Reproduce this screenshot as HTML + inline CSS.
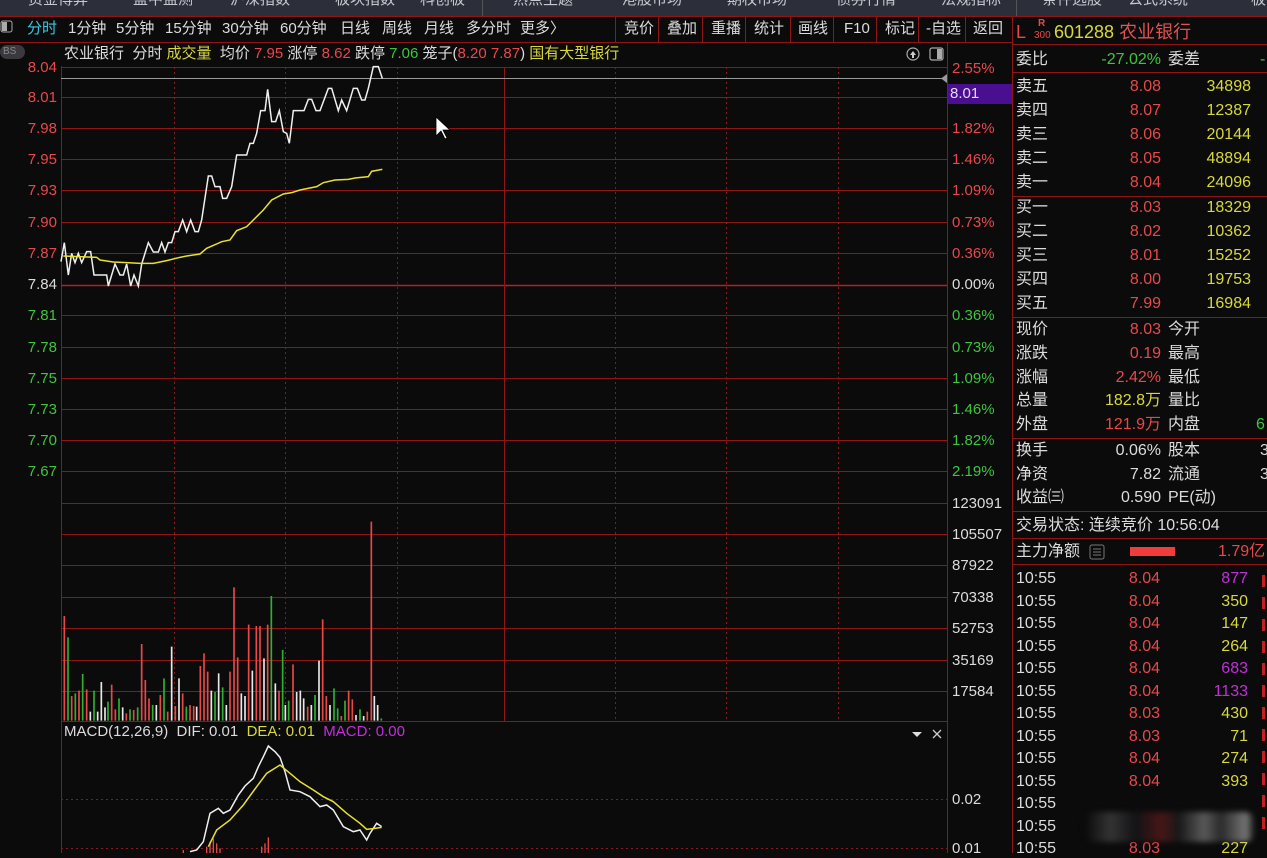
<!DOCTYPE html>
<html><head><meta charset="utf-8"><style>
*{margin:0;padding:0;box-sizing:border-box}
body{width:1267px;height:853px;overflow:hidden;background:#0b0b0c;font-family:"Liberation Sans","Noto Sans CJK SC",sans-serif;font-size:15px;color:#d8d8d8;position:relative}
.a{position:absolute;white-space:nowrap;line-height:18px}
.r{color:#e8484a}.g{color:#3ec43e}.y{color:#d8d83a}.w{color:#dcdcdc}.p{color:#c030d8}.c{color:#3cc8e0}
.ra{text-align:right}
</style></head><body>
<div style="position:absolute;left:0;top:0;width:1267px;height:16px;background:#2c2f3a;overflow:hidden">
<div class="a" style="top:-9px;left:28px;color:#c8c8d0;font-size:15px">资金博弈</div>
<div class="a" style="top:-9px;left:133px;color:#c8c8d0">盘中监测</div>
<div class="a" style="top:-9px;left:230px;color:#c8c8d0">沪深指数</div>
<div class="a" style="top:-9px;left:335px;color:#c8c8d0">板块指数</div>
<div class="a" style="top:-9px;left:420px;color:#c8c8d0">科创板</div>
<div class="a" style="top:-9px;left:513px;color:#c8c8d0">热点主题</div>
<div class="a" style="top:-9px;left:622px;color:#c8c8d0">港股市场</div>
<div class="a" style="top:-9px;left:727px;color:#c8c8d0">期权市场</div>
<div class="a" style="top:-9px;left:836px;color:#c8c8d0">债券行情</div>
<div class="a" style="top:-9px;left:941px;color:#c8c8d0">法规指标</div>
<div class="a" style="top:-9px;left:1042px;color:#c8c8d0">条件选股</div>
<div class="a" style="top:-9px;left:1128px;color:#c8c8d0">公式系统</div>
<div class="a" style="top:-9px;left:1251px;color:#c8c8d0">板</div>
<div style="position:absolute;left:482px;top:0;width:1px;height:16px;background:#555"></div>
<div style="position:absolute;left:1016px;top:0;width:1px;height:16px;background:#555"></div>
</div>

<svg width="1267" height="853" style="position:absolute;left:0;top:0" xmlns="http://www.w3.org/2000/svg">
<g stroke="#8e1616" stroke-width="1" fill="none">
<line x1="0" y1="16.5" x2="1267" y2="16.5"/>
<line x1="0" y1="42.5" x2="1012" y2="42.5"/>
<line x1="615.5" y1="16" x2="615.5" y2="42"/><line x1="658.5" y1="16" x2="658.5" y2="42"/><line x1="702.5" y1="16" x2="702.5" y2="42"/><line x1="745.5" y1="16" x2="745.5" y2="42"/><line x1="790.5" y1="16" x2="790.5" y2="42"/><line x1="833.5" y1="16" x2="833.5" y2="42"/><line x1="876.5" y1="16" x2="876.5" y2="42"/><line x1="918.5" y1="16" x2="918.5" y2="42"/><line x1="965.5" y1="16" x2="965.5" y2="42"/>
<line x1="61.5" y1="66" x2="61.5" y2="853"/>
<line x1="947.5" y1="42" x2="947.5" y2="853"/>
<line x1="1012.5" y1="16" x2="1012.5" y2="853"/>
<path d="M61 67.5H947M61 97.5H947M61 128.5H947M61 159.5H947M61 190.5H947M61 222.5H947M61 253.5H947M61 315.5H947M61 347.5H947M61 378.5H947M61 409.5H947M61 440.5H947M61 471.5H947M61 503.5H947"/>
<path d="M61 285.5H947" stroke="#c01c1c" stroke-width="1.5"/>
<path d="M61 534.5H947M61 565.5H947M61 597.5H947M61 628.5H947M61 660.5H947M61 691.5H947M61 721.5H947"/>
<line x1="504.5" y1="67" x2="504.5" y2="721"/>
<path d="M1012 44.5H1267M1012 72.5H1267M1012 196.5H1267M1012 317.5H1267M1012 438.5H1267M1012 511.5H1267M1012 538.5H1267M1012 564.5H1267"/>
</g>
<g stroke="#8e1616" stroke-width="1" stroke-dasharray="2,3" fill="none">
<path d="M174.5 67V721M285.5 67V721M397.5 67V721M615.5 67V721M726.5 67V721M838.5 67V721"/>
<path d="M61 799.5H947M61 848.5H947"/>
</g>
<line x1="61" y1="78.5" x2="945" y2="78.5" stroke="#9a9a9a" stroke-width="1"/>
<path d="M941 78.5 L947 74 L947 83Z" fill="#9a9a9a"/>
<rect x="948" y="84" width="64" height="20" fill="#4a0e90"/>
<g transform="translate(0,40) scale(0.33333)" fill="none" stroke-width="4.5">
<polyline stroke="#f0f0f0" points="183,665 193,608 205,705 215,640 225,668 235,640 245,668 260,635 272,635 282,705 320,705 325,738 345,672 360,705 370,705 380,672 392,738 402,705 415,738 425,672 445,608 460,636 475,636 485,608 495,636 505,608 515,608 525,575 535,575 548,540 560,575 572,540 585,575 595,575 605,540 625,408 635,408 645,440 660,440 668,475 680,475 695,440 710,345 740,345 750,310 760,310 770,280 782,212 795,212 803,148 815,245 827,245 838,212 850,275 860,280 868,310 880,212 912,212 925,178 935,178 948,212 960,212 985,145 995,145 1015,212 1025,180 1040,212 1060,145 1072,145 1085,180 1095,180 1105,145 1120,80 1135,80 1147,115"/>
<polyline stroke="#e8e030" points="190,648 290,652 300,660 340,666 380,668 420,670 460,670 500,662 540,652 560,648 600,642 620,625 650,612 665,605 690,600 710,572 740,560 755,545 770,530 790,510 815,480 850,462 875,458 900,450 950,440 970,428 1005,420 1045,418 1065,414 1105,410 1115,394 1147,388"/>
</g>
<g transform="translate(0,480) scale(0.33333)" fill="none" stroke-width="5">
<path stroke="#e84848" d="M193 722V408M215 722V648M237 722V632M260 722V628M335 722V614M346 722V688M379 722V700M401 722V690M425 722V492M436 722V600M447 722V655M481 722V645M503 722V695M526 722V678M548 722V640M570 722V675M581 722V678M601 722V558M612 722V520M623 722V575M690 722V575M702 722V322M713 722V532M746 722V434M769 722V438M780 722V438M803 722V434M837 722V632M879 722V553M923 722V680M968 722V418M979 722V648M1024 722V708M1046 722V632M1057 722V658M1102 722V695M1114 722V125"/>
<path stroke="#30b030" d="M204 722V472M226 722V640M248 722V582M282 722V632M324 722V665M357 722V655M390 722V688M413 722V682M458 722V675M492 722V595M559 722V680M645 722V636M668 722V622M814 722V348M848 722V510M866 722V662M945 722V645M1002 722V625M1013 722V685M1035 722V662M1080 722V688M1144 722V715"/>
<path stroke="#e8e8e8" d="M271 722V695M293 722V695M304 722V606M315 722V682M368 722V682M469 722V675M515 722V500M537 722V595M590 722V680M634 722V632M656 722V580M679 722V675M724 722V640M735 722V648M757 722V572M792 722V535M826 722V610M856 722V675M890 722V636M901 722V632M911 722V655M934 722V675M957 722V542M990 722V675M1068 722V705M1091 722V708M1123 722V648M1133 722V675"/>
</g>
<g transform="translate(0,480) scale(0.33333)" fill="none" stroke-width="4.5">
<path stroke="#e84848" stroke-width="4" d="M550 1119V1110M620 1119V1100M630 1119V1085M640 1119V1075M650 1119V1090M660 1119V1105M785 1119V1100M795 1119V1090M805 1119V1072"/>
<polyline stroke="#f0f0f0" points="570,1115 590,1110 610,1085 630,1000 655,985 670,1000 690,990 715,945 735,918 760,895 775,860 790,830 805,798 825,815 840,832 855,875 870,930 900,935 930,950 960,980 980,975 1000,990 1030,1040 1060,1055 1080,1050 1100,1080 1110,1060 1130,1030 1145,1040"/>
<polyline stroke="#e8e030" points="625,1100 650,1050 690,1020 730,975 770,920 800,880 840,855 870,880 900,905 940,930 970,950 1000,965 1040,1000 1080,1030 1100,1048 1125,1045 1145,1042"/>
</g>
<circle cx="913" cy="54" r="6" fill="none" stroke="#aaa" stroke-width="1.2"/><path d="M910 55L913 51L916 55Z M912 55h2v3h-2z" fill="#ccc"/>
<rect x="930" y="48" width="13" height="12" rx="2" fill="none" stroke="#aaa" stroke-width="1.2"/><rect x="937" y="49" width="5" height="10" fill="#aaa"/>
<path d="M912 732h10l-5 5z" fill="#ddd"/>
<path d="M933 730l8 8M941 730l-8 8" stroke="#ccc" stroke-width="1.3"/>
<rect x="1" y="21" width="11" height="11" rx="2" fill="none" stroke="#aaa"/><rect x="2" y="22" width="5" height="9" fill="#aaa"/>
<rect x="0" y="45" width="25" height="14" rx="7" fill="#3a3a3e"/>
<path d="M436 117V136L441 131L445 139L447 138L443 130L450 130Z" fill="#fff" stroke="#000" stroke-width="0.8"/>
<rect x="1130" y="547" width="45" height="9" fill="#f03c3c"/>
<rect x="1090" y="545" width="14" height="14" rx="2" fill="none" stroke="#777"/><path d="M1093 549h8M1093 552h8M1093 555h8" stroke="#777"/>
</svg>

<div class="a c" style="top:20px;left:27px">分时</div>
<div class="a w" style="top:20px;left:68px">1分钟</div>
<div class="a w" style="top:20px;left:116px">5分钟</div>
<div class="a w" style="top:20px;left:165px">15分钟</div>
<div class="a w" style="top:20px;left:222px">30分钟</div>
<div class="a w" style="top:20px;left:280px">60分钟</div>
<div class="a w" style="top:20px;left:340px">日线</div>
<div class="a w" style="top:20px;left:382px">周线</div>
<div class="a w" style="top:20px;left:424px">月线</div>
<div class="a w" style="top:20px;left:466px">多分时</div>
<div class="a w" style="top:20px;left:520px">更多〉</div>
<div class="a w" style="top:20px;left:624px">竞价</div>
<div class="a w" style="top:20px;left:667px">叠加</div>
<div class="a w" style="top:20px;left:711px">重播</div>
<div class="a w" style="top:20px;left:754px">统计</div>
<div class="a w" style="top:20px;left:798px">画线</div>
<div class="a w" style="top:20px;left:844px">F10</div>
<div class="a w" style="top:20px;left:885px">标记</div>
<div class="a w" style="top:20px;left:926px">-自选</div>
<div class="a w" style="top:20px;left:973px">返回</div>
<div class="a" style="top:46px;left:3px;font-size:10px;line-height:12px;color:#888">BS</div>

<div class="a" style="top:45px;left:64px"><span class="w">农业银行&nbsp; 分时 </span><span class="y">成交量</span><span class="w">&nbsp; 均价 </span><span class="r">7.95</span><span class="w"> 涨停 </span><span class="r">8.62</span><span class="w"> 跌停 </span><span class="g">7.06</span><span class="w"> 笼子(</span><span class="r">8.20 7.87</span><span class="w">) </span><span class="y">国有大型银行</span></div>

<div style="position:absolute;left:0;top:1px">
<div class="a r ra" style="top:58px;left:0;width:57px">8.04</div>
<div class="a r ra" style="top:88px;left:0;width:57px">8.01</div>
<div class="a r ra" style="top:119px;left:0;width:57px">7.98</div>
<div class="a r ra" style="top:150px;left:0;width:57px">7.95</div>
<div class="a r ra" style="top:181px;left:0;width:57px">7.93</div>
<div class="a r ra" style="top:213px;left:0;width:57px">7.90</div>
<div class="a r ra" style="top:244px;left:0;width:57px">7.87</div>
<div class="a w ra" style="top:275px;left:0;width:57px">7.84</div>
<div class="a g ra" style="top:306px;left:0;width:57px">7.81</div>
<div class="a g ra" style="top:338px;left:0;width:57px">7.78</div>
<div class="a g ra" style="top:369px;left:0;width:57px">7.75</div>
<div class="a g ra" style="top:400px;left:0;width:57px">7.73</div>
<div class="a g ra" style="top:431px;left:0;width:57px">7.70</div>
<div class="a g ra" style="top:462px;left:0;width:57px">7.67</div>

<div class="a r" style="top:59px;left:952px">2.55%</div>
<div class="a" style="top:84px;left:950px;color:#e8d8ff">8.01</div>
<div class="a r" style="top:119px;left:952px">1.82%</div>
<div class="a r" style="top:150px;left:952px">1.46%</div>
<div class="a r" style="top:181px;left:952px">1.09%</div>
<div class="a r" style="top:213px;left:952px">0.73%</div>
<div class="a r" style="top:244px;left:952px">0.36%</div>
<div class="a w" style="top:275px;left:952px">0.00%</div>
<div class="a g" style="top:306px;left:952px">0.36%</div>
<div class="a g" style="top:338px;left:952px">0.73%</div>
<div class="a g" style="top:369px;left:952px">1.09%</div>
<div class="a g" style="top:400px;left:952px">1.46%</div>
<div class="a g" style="top:431px;left:952px">1.82%</div>
<div class="a g" style="top:462px;left:952px">2.19%</div>
<div class="a w" style="top:494px;left:952px">123091</div>
<div class="a w" style="top:525px;left:952px">105507</div>
<div class="a w" style="top:556px;left:952px">87922</div>
<div class="a w" style="top:588px;left:952px">70338</div>
<div class="a w" style="top:619px;left:952px">52753</div>
<div class="a w" style="top:651px;left:952px">35169</div>
<div class="a w" style="top:682px;left:952px">17584</div>
<div class="a w" style="top:790px;left:952px">0.02</div>
<div class="a w" style="top:839px;left:952px">0.01</div>
</div>

<div class="a" style="top:723px;left:64px"><span class="w">MACD(12,26,9)&nbsp; DIF: 0.01&nbsp; </span><span class="y">DEA: 0.01&nbsp; </span><span class="p">MACD: 0.00</span></div>

<div class="a" style="top:21px;left:1016px;font-size:18px;line-height:22px"><span class="r">L</span></div>
<div class="a r" style="top:18px;left:1038px;font-size:10px;line-height:11px;font-weight:bold">R</div>
<div class="a r" style="top:30px;left:1034px;font-size:10px;line-height:11px">300</div>
<div class="a" style="top:21px;left:1054px;font-size:18px;line-height:22px"><span class="y">601288</span> <span class="r" style="color:#e25050">农业银行</span></div>

<div class="a w" style="top:51px;left:1016px;font-size:16px">委比</div>
<div class="a g ra" style="top:51px;left:1060px;width:101px;font-size:16px">-27.02%</div>
<div class="a w" style="top:51px;left:1168px;font-size:16px">委差</div>
<div class="a g" style="top:51px;left:1260px;font-size:16px">-</div>

<div style="position:absolute;left:0;top:2px">
<div class="a w" style="top:76px;left:1016px;font-size:16px">卖五</div><div class="a r ra" style="top:76px;left:1080px;width:81px;font-size:16px">8.08</div><div class="a y ra" style="top:76px;left:1170px;width:81px;font-size:16px">34898</div>
<div class="a w" style="top:100px;left:1016px;font-size:16px">卖四</div><div class="a r ra" style="top:100px;left:1080px;width:81px;font-size:16px">8.07</div><div class="a y ra" style="top:100px;left:1170px;width:81px;font-size:16px">12387</div>
<div class="a w" style="top:124px;left:1016px;font-size:16px">卖三</div><div class="a r ra" style="top:124px;left:1080px;width:81px;font-size:16px">8.06</div><div class="a y ra" style="top:124px;left:1170px;width:81px;font-size:16px">20144</div>
<div class="a w" style="top:148px;left:1016px;font-size:16px">卖二</div><div class="a r ra" style="top:148px;left:1080px;width:81px;font-size:16px">8.05</div><div class="a y ra" style="top:148px;left:1170px;width:81px;font-size:16px">48894</div>
<div class="a w" style="top:172px;left:1016px;font-size:16px">卖一</div><div class="a r ra" style="top:172px;left:1080px;width:81px;font-size:16px">8.04</div><div class="a y ra" style="top:172px;left:1170px;width:81px;font-size:16px">24096</div>
<div class="a w" style="top:197px;left:1016px;font-size:16px">买一</div><div class="a r ra" style="top:197px;left:1080px;width:81px;font-size:16px">8.03</div><div class="a y ra" style="top:197px;left:1170px;width:81px;font-size:16px">18329</div>
<div class="a w" style="top:221px;left:1016px;font-size:16px">买二</div><div class="a r ra" style="top:221px;left:1080px;width:81px;font-size:16px">8.02</div><div class="a y ra" style="top:221px;left:1170px;width:81px;font-size:16px">10362</div>
<div class="a w" style="top:245px;left:1016px;font-size:16px">买三</div><div class="a r ra" style="top:245px;left:1080px;width:81px;font-size:16px">8.01</div><div class="a y ra" style="top:245px;left:1170px;width:81px;font-size:16px">15252</div>
<div class="a w" style="top:269px;left:1016px;font-size:16px">买四</div><div class="a r ra" style="top:269px;left:1080px;width:81px;font-size:16px">8.00</div><div class="a y ra" style="top:269px;left:1170px;width:81px;font-size:16px">19753</div>
<div class="a w" style="top:293px;left:1016px;font-size:16px">买五</div><div class="a r ra" style="top:293px;left:1080px;width:81px;font-size:16px">7.99</div><div class="a y ra" style="top:293px;left:1170px;width:81px;font-size:16px">16984</div>

<div class="a w" style="top:319px;left:1016px;font-size:16px">现价</div><div class="a r ra" style="top:319px;left:1060px;width:101px;font-size:16px">8.03</div><div class="a w" style="top:319px;left:1168px;font-size:16px">今开</div>
<div class="a w" style="top:343px;left:1016px;font-size:16px">涨跌</div><div class="a r ra" style="top:343px;left:1060px;width:101px;font-size:16px">0.19</div><div class="a w" style="top:343px;left:1168px;font-size:16px">最高</div>
<div class="a w" style="top:367px;left:1016px;font-size:16px">涨幅</div><div class="a r ra" style="top:367px;left:1060px;width:101px;font-size:16px">2.42%</div><div class="a w" style="top:367px;left:1168px;font-size:16px">最低</div>
<div class="a w" style="top:390px;left:1016px;font-size:16px">总量</div><div class="a y ra" style="top:390px;left:1060px;width:101px;font-size:16px">182.8万</div><div class="a w" style="top:390px;left:1168px;font-size:16px">量比</div>
<div class="a w" style="top:414px;left:1016px;font-size:16px">外盘</div><div class="a r ra" style="top:414px;left:1060px;width:101px;font-size:16px">121.9万</div><div class="a w" style="top:414px;left:1168px;font-size:16px">内盘</div><div class="a g" style="top:414px;left:1256px;font-size:16px">6</div>

<div class="a w" style="top:440px;left:1016px;font-size:16px">换手</div><div class="a w ra" style="top:440px;left:1060px;width:101px;font-size:16px">0.06%</div><div class="a w" style="top:440px;left:1168px;font-size:16px">股本</div><div class="a w" style="top:440px;left:1260px;font-size:16px">3</div>
<div class="a w" style="top:464px;left:1016px;font-size:16px">净资</div><div class="a w ra" style="top:464px;left:1060px;width:101px;font-size:16px">7.82</div><div class="a w" style="top:464px;left:1168px;font-size:16px">流通</div><div class="a w" style="top:464px;left:1260px;font-size:16px">3</div>
<div class="a w" style="top:487px;left:1016px;font-size:16px">收益㈢</div><div class="a w ra" style="top:487px;left:1060px;width:101px;font-size:16px">0.590</div><div class="a w" style="top:487px;left:1168px;font-size:16px">PE(动)</div>

<div class="a w" style="top:515px;left:1016px;font-size:16px">交易状态: 连续竞价 10:56:04</div>
<div class="a w" style="top:541px;left:1016px;font-size:16px">主力净额</div>
<div class="a r" style="top:541px;left:1218px;font-size:16px">1.79亿</div>

<div class="a w" style="top:568px;left:1016px;font-size:16px">10:55</div><div class="a r ra" style="top:568px;left:1090px;width:70px;font-size:16px">8.04</div><div class="a p ra" style="top:568px;left:1180px;width:68px;font-size:16px">877</div>
<div class="a w" style="top:591px;left:1016px;font-size:16px">10:55</div><div class="a r ra" style="top:591px;left:1090px;width:70px;font-size:16px">8.04</div><div class="a y ra" style="top:591px;left:1180px;width:68px;font-size:16px">350</div>
<div class="a w" style="top:613px;left:1016px;font-size:16px">10:55</div><div class="a r ra" style="top:613px;left:1090px;width:70px;font-size:16px">8.04</div><div class="a y ra" style="top:613px;left:1180px;width:68px;font-size:16px">147</div>
<div class="a w" style="top:636px;left:1016px;font-size:16px">10:55</div><div class="a r ra" style="top:636px;left:1090px;width:70px;font-size:16px">8.04</div><div class="a y ra" style="top:636px;left:1180px;width:68px;font-size:16px">264</div>
<div class="a w" style="top:658px;left:1016px;font-size:16px">10:55</div><div class="a r ra" style="top:658px;left:1090px;width:70px;font-size:16px">8.04</div><div class="a p ra" style="top:658px;left:1180px;width:68px;font-size:16px">683</div>
<div class="a w" style="top:681px;left:1016px;font-size:16px">10:55</div><div class="a r ra" style="top:681px;left:1090px;width:70px;font-size:16px">8.04</div><div class="a p ra" style="top:681px;left:1180px;width:68px;font-size:16px">1133</div>
<div class="a w" style="top:703px;left:1016px;font-size:16px">10:55</div><div class="a r ra" style="top:703px;left:1090px;width:70px;font-size:16px">8.03</div><div class="a y ra" style="top:703px;left:1180px;width:68px;font-size:16px">430</div>
<div class="a w" style="top:726px;left:1016px;font-size:16px">10:55</div><div class="a r ra" style="top:726px;left:1090px;width:70px;font-size:16px">8.03</div><div class="a y ra" style="top:726px;left:1180px;width:68px;font-size:16px">71</div>
<div class="a w" style="top:748px;left:1016px;font-size:16px">10:55</div><div class="a r ra" style="top:748px;left:1090px;width:70px;font-size:16px">8.04</div><div class="a y ra" style="top:748px;left:1180px;width:68px;font-size:16px">274</div>
<div class="a w" style="top:771px;left:1016px;font-size:16px">10:55</div><div class="a r ra" style="top:771px;left:1090px;width:70px;font-size:16px">8.04</div><div class="a y ra" style="top:771px;left:1180px;width:68px;font-size:16px">393</div>
<div class="a w" style="top:793px;left:1016px;font-size:16px">10:55</div>
<div class="a w" style="top:816px;left:1016px;font-size:16px">10:55</div>
<div class="a w" style="top:838px;left:1016px;font-size:16px">10:55</div><div class="a r ra" style="top:838px;left:1090px;width:70px;font-size:16px">8.03</div><div class="a y ra" style="top:838px;left:1180px;width:68px;font-size:16px">227</div>
<div style="position:absolute;left:1085px;top:810px;width:170px;height:30px;background:linear-gradient(90deg,#0b0b0c,#555 15%,#1a1a1e 30%,#7a2020 45%,#222 55%,#999 70%,#444 80%,#ccc 95%,#0b0b0c);opacity:0.55;filter:blur(3px);border-radius:10px"></div>
<div style="position:absolute;left:1262px;top:573px;width:3px;height:260px;background:repeating-linear-gradient(#c02020 0 12px,transparent 12px 22px)"></div>
</div>
</body></html>
